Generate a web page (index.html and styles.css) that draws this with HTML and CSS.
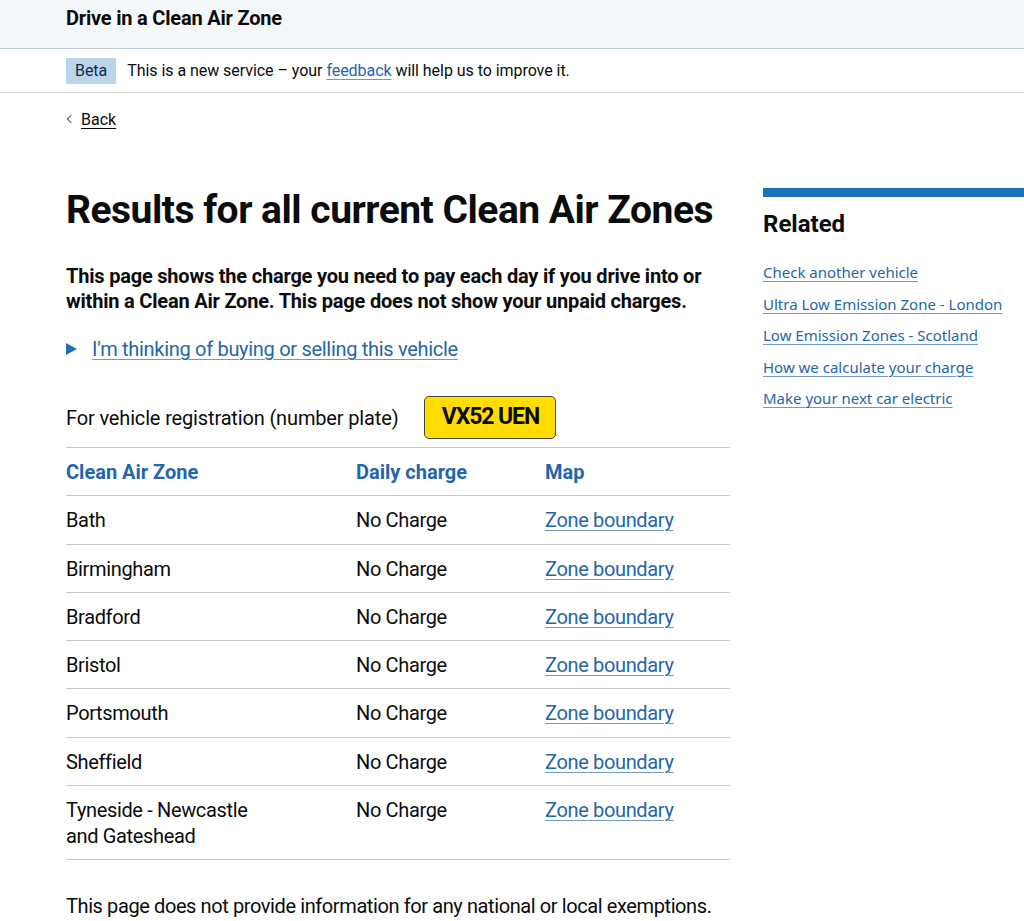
FILE: index.html
```html
<!DOCTYPE html>
<html lang="en">
<head>
    <meta charset="UTF-8">
    <title>Drive in a Clean Air Zone</title>
    <link rel="stylesheet" href="styles.css">
</head>
<body>

<header class="service-header">
    <div class="width-container">
        <span class="service-name">Drive in a Clean Air Zone</span>
    </div>
</header>

<div class="phase-banner">
    <div class="width-container phase-inner">
        <strong class="phase-tag">Beta</strong>
        <span>This is a new service &ndash; your <a href="#" class="link">feedback</a> will help us to improve it.</span>
    </div>
</div>

<div class="width-container">
    <a href="#" class="back-link">Back</a>

    <main class="layout">
        <div class="main-column">
            <h1 class="heading-xl">Results for all current Clean Air Zones</h1>

            <p class="lead">This page shows the charge you need to pay each day if you drive into or within a Clean Air Zone. This page does not show your unpaid charges.</p>

            <div class="details">
                <span class="details-arrow"></span>
                <a href="#" class="link">I'm thinking of buying or selling this vehicle</a>
            </div>

            <div class="vrn-row">
                <span>For vehicle registration (number plate)</span>
                <span class="plate">VX52 UEN</span>
            </div>

            <table class="results">
                <thead>
                    <tr>
                        <th class="col-zone">Clean Air Zone</th>
                        <th class="col-charge">Daily charge</th>
                        <th>Map</th>
                    </tr>
                </thead>
                <tbody>
                    <tr><td>Bath</td><td>No Charge</td><td><a href="#" class="link">Zone boundary</a></td></tr>
                    <tr><td>Birmingham</td><td>No Charge</td><td><a href="#" class="link">Zone boundary</a></td></tr>
                    <tr><td>Bradford</td><td>No Charge</td><td><a href="#" class="link">Zone boundary</a></td></tr>
                    <tr><td>Bristol</td><td>No Charge</td><td><a href="#" class="link">Zone boundary</a></td></tr>
                    <tr><td>Portsmouth</td><td>No Charge</td><td><a href="#" class="link">Zone boundary</a></td></tr>
                    <tr><td>Sheffield</td><td>No Charge</td><td><a href="#" class="link">Zone boundary</a></td></tr>
                    <tr><td>Tyneside - Newcastle<br>and Gateshead</td><td>No Charge</td><td><a href="#" class="link">Zone boundary</a></td></tr>
                </tbody>
            </table>

            <p class="body">This page does not provide information for any national or local exemptions.</p>
        </div>

        <aside class="related">
            <h2 class="related-title">Related</h2>
            <ul class="related-list">
                <li><a href="#" class="link">Check another vehicle</a></li>
                <li><a href="#" class="link">Ultra Low Emission Zone - London</a></li>
                <li><a href="#" class="link">Low Emission Zones - Scotland</a></li>
                <li><a href="#" class="link">How we calculate your charge</a></li>
                <li><a href="#" class="link">Make your next car electric</a></li>
            </ul>
        </aside>
    </main>
</div>

</body>
</html>
```

FILE: styles.css
```css
/* GOV.UK style results page */
body {
    margin: 0;
    font-family: 'Roboto', 'Liberation Sans', sans-serif;
    color: #0b0c0c;
    background-color: #fff;
    overflow-x: hidden;
}

.width-container {
    padding-left: 66px;
}

.link {
    color: #2566a8;
    text-decoration: underline;
    text-decoration-color: #6f98c2;
    text-underline-offset: 3px;
    text-decoration-thickness: 1px;
}

/* Header */
.service-header {
    background-color: #f4f8fb;
    border-bottom: 1px solid #bfd1e0;
    height: 49px;
    box-sizing: border-box;
    padding-top: 6px;
}

.service-name {
    font-weight: bold;
    font-size: 20px;
    line-height: 24px;
    letter-spacing: -0.2px;
}

/* Beta banner */
.phase-banner {
    border-bottom: 1px solid #d6d6d6;
    height: 44px;
    box-sizing: border-box;
    display: flex;
    align-items: center;
}

.phase-inner {
    display: flex;
    align-items: center;
    gap: 11px;
    font-size: 16px;
    letter-spacing: -0.05px;
}

.phase-tag {
    background-color: #bbd4ea;
    color: #0c2d4a;
    font-weight: normal;
    padding: 3px 9px;
    line-height: 20px;
}

/* Back link */
.back-link {
    display: inline-block;
    margin-top: 17px;
    padding-left: 15px;
    position: relative;
    font-size: 16px;
    line-height: 20px;
    color: #0b0c0c;
    text-decoration: underline;
    text-underline-offset: 3px;
}

.back-link::before {
    content: "";
    position: absolute;
    left: 2px;
    top: 6px;
    width: 5px;
    height: 5px;
    border-left: 1px solid #505a5f;
    border-bottom: 1px solid #505a5f;
    transform: rotate(45deg);
}

/* Layout */
.layout {
    display: flex;
    gap: 33px;
    margin-top: 58px;
}

.main-column {
    width: 664px;
    flex-shrink: 0;
}

.heading-xl {
    font-size: 39px;
    line-height: 44px;
    margin: 0 0 32px;
    letter-spacing: -0.5px;
}

.lead {
    font-weight: bold;
    font-size: 20px;
    line-height: 25px;
    margin: 0 0 22px;
    letter-spacing: -0.2px;
}

.details {
    display: flex;
    align-items: center;
    gap: 15px;
    font-size: 20px;
    line-height: 26px;
    letter-spacing: -0.3px;
    margin-bottom: 34px;
}

.details-arrow {
    width: 0;
    height: 0;
    border-left: 11px solid #1d70b8;
    border-top: 6.5px solid transparent;
    border-bottom: 6.5px solid transparent;
}

.vrn-row {
    display: flex;
    align-items: center;
    gap: 26px;
    font-size: 20px;
    letter-spacing: -0.15px;
    margin-bottom: 8px;
}

.plate {
    display: inline-block;
    width: 132px;
    height: 43px;
    box-sizing: border-box;
    background-color: #ffdd00;
    border: 1.5px solid #4a4330;
    border-radius: 5px;
    text-align: center;
    line-height: 40px;
    font-weight: bold;
    font-size: 23px;
    letter-spacing: -1.1px;
}

/* Results table */
.results {
    width: 100%;
    border-collapse: collapse;
    font-size: 20px;
    line-height: 26px;
}

.results th,
.results td {
    text-align: left;
    vertical-align: top;
    padding: 11px 0 10.3px;
    border-top: 1px solid #c8c8c8;
}

.results td {
    letter-spacing: -0.35px;
}

.results tbody tr:last-child td {
    border-bottom: 1px solid #c8c8c8;
}

.results th {
    color: #1f67aa;
    font-weight: bold;
}

.col-zone {
    width: 290px;
}

.col-charge {
    width: 189px;
}

.body {
    font-size: 20px;
    line-height: 26px;
    letter-spacing: -0.4px;
    margin: 33px 0 0;
}

/* Related */
.related {
    width: 300px;
    flex-shrink: 0;
    border-top: 9px solid #1d70b8;
}

.related-title {
    font-size: 24px;
    line-height: 30px;
    margin: 12px 0 23px;
}

.related-list {
    list-style: none;
    margin: 0;
    padding: 0;
    font-family: 'Noto Sans', sans-serif;
    font-size: 15px;
}

.related-list li {
    line-height: 20px;
    margin-bottom: 11.5px;
}
```
